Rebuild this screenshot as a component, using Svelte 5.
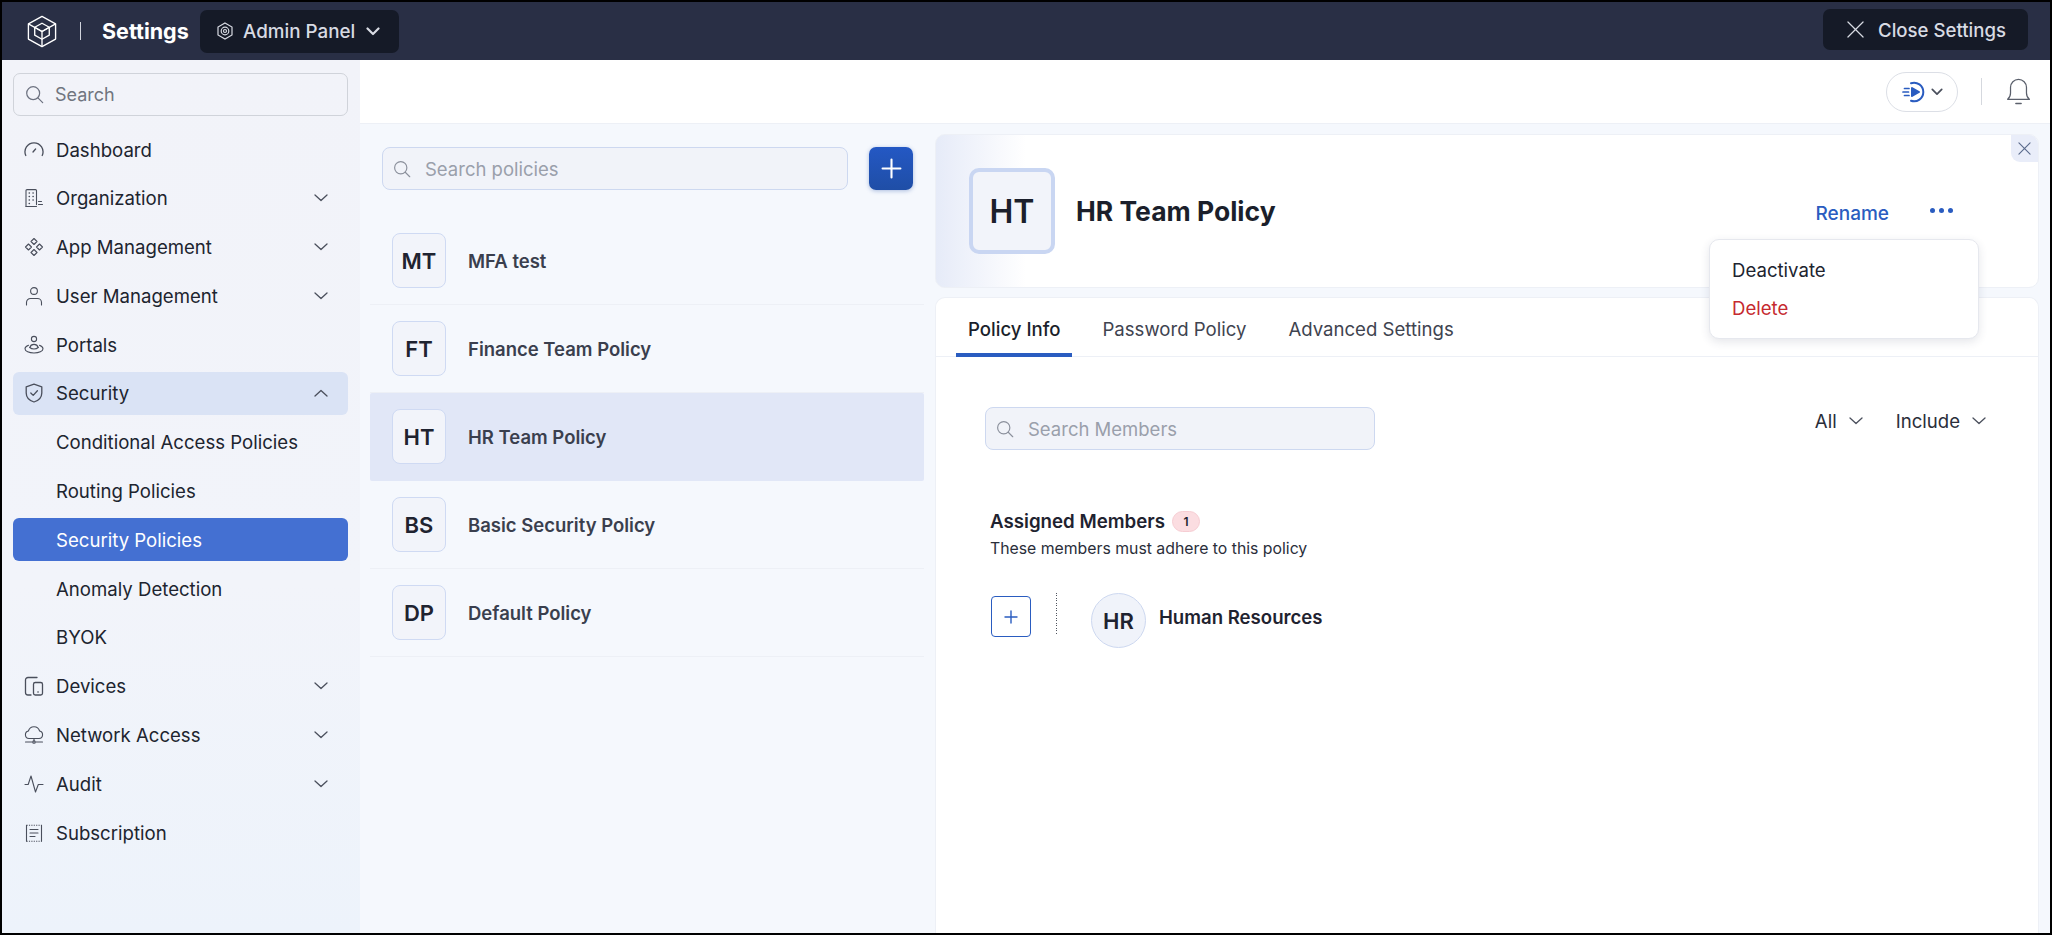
<script>
    const nav = [
        { label: "Dashboard", icon: "gauge" },
        { label: "Organization", icon: "building", arrow: "down" },
        { label: "App Management", icon: "apps", arrow: "down" },
        { label: "User Management", icon: "user", arrow: "down" },
        { label: "Portals", icon: "portal" },
        { label: "Security", icon: "shield", arrow: "up", open: true },
        { label: "Conditional Access Policies" },
        { label: "Routing Policies" },
        { label: "Security Policies", active: true },
        { label: "Anomaly Detection" },
        { label: "BYOK" },
        { label: "Devices", icon: "devices", arrow: "down" },
        { label: "Network Access", icon: "cloud", arrow: "down" },
        { label: "Audit", icon: "pulse", arrow: "down" },
        { label: "Subscription", icon: "receipt" }
    ]

    const policies = [
        { short: "MT", name: "MFA test" },
        { short: "FT", name: "Finance Team Policy" },
        { short: "HT", name: "HR Team Policy", selected: true },
        { short: "BS", name: "Basic Security Policy" },
        { short: "DP", name: "Default Policy" }
    ]

    const tabs = ["Policy Info", "Password Policy", "Advanced Settings"]
</script>

{#snippet searchIcon()}
    <svg class="search-icon" viewBox="0 0 20 20" fill="none" stroke="currentColor" stroke-width="1.3" stroke-linecap="round">
        <circle cx="8.6" cy="8.6" r="6.8" />
        <path d="M13.6 13.6 18.6 18.6" />
    </svg>
{/snippet}

{#snippet chevron(dir)}
    <svg class="chevron" viewBox="0 0 14 8" fill="none" stroke="currentColor" stroke-width="1.3" stroke-linecap="round" stroke-linejoin="round">
        {#if dir === "up"}
            <path d="M1 7 7 1.5 13 7" />
        {:else}
            <path d="M1 1 7 6.5 13 1" />
        {/if}
    </svg>
{/snippet}

{#snippet navIcon(name)}
    <svg class="nav-icon" viewBox="0 0 20 20" fill="none" stroke="currentColor" stroke-width="1.1" stroke-linecap="round" stroke-linejoin="round">
        {#if name === "gauge"}
            <path d="M1.800 15.500a9 9 0 1 1 16.400 0" stroke-width="1.300" /><path d="M9 12 11.600 9" stroke-width="1.300" />
        {:else if name === "building"}
            <path d="M2 18.500V2.600a1 1 0 0 1 1-1h8.500a1 1 0 0 1 1 1v14" /><path d="M2 18.500h10.500" /><path d="M14.500 13.500h3M14.500 16.500h4" />
            <path d="M5.200 5h.2M9 5h.2M5.200 8.500h.2M9 8.500h.2M5.200 12h.2M9 12h.2M5.200 15.500h.2" stroke-width="1.500" />
        {:else if name === "apps"}
            <path d="M10 1.500 13 4.500 10 7.500 7 4.500Z" /><path d="M10 12.500 13 15.500 10 18.500 7 15.500Z" /><path d="M4.500 7 7.500 10 4.500 13 1.500 10Z" /><path d="M15.500 7 18.500 10 15.500 13 12.500 10Z" />
        {:else if name === "user"}
            <circle cx="10" cy="5" r="3.400" /><path d="M2.500 19v-2.500a4 4 0 0 1 4-4h7a4 4 0 0 1 4 4V19" />
        {:else if name === "portal"}
            <circle cx="10" cy="4" r="2.600" /><path d="M5.800 12.500a4.400 4.400 0 0 1 8.400 0" /><path d="M4.500 10.200C2.600 11 1 12 1 13.700 1 16.200 5 18 10 18s9-1.800 9-4.300c0-1.700-1.600-2.700-3.500-3.500" /><path d="M5.800 12.500c1 1 2.500 1.500 4.200 1.500s3.200-.5 4.200-1.500" />
        {:else if name === "shield"}
            <path d="M10 1.200 17.800 3.800V10c0 4.500-3.400 7.600-7.800 9-4.400-1.400-7.800-4.500-7.800-9V3.800Z" stroke-width="1.300" /><path d="M6.800 10 9.200 12.400 13.400 7.800" stroke-width="1.300" />
        {:else if name === "devices"}
            <path d="M13 1.500H4a2.500 2.500 0 0 0-2.500 2.500v12.500A2.500 2.500 0 0 0 4 19h3" stroke-width="1.300" /><rect x="9.500" y="6.500" width="9" height="12.500" rx="1.800" stroke-width="1.300" /><path d="M14 16h.1" stroke-width="1.600" />
        {:else if name === "cloud"}
            <path d="M5 13.500a3.800 3.800 0 0 1-.6-7.500 5.800 5.800 0 0 1 11.200 0 3.800 3.800 0 0 1-.6 7.500Z" /><path d="M10 13.500v3.500M1.500 17h6.500M12 17h6.500" /><circle cx="10" cy="17" r="1.300" />
        {:else if name === "pulse"}
            <path d="M1 10.500h3.200L7 2l4.500 16 2.800-7.500H19" />
        {:else if name === "receipt"}
            <path d="M2.500 2.200v16M17.500 2.200v16" /><path d="M2.500 2.200h15M2.500 18.200h15" stroke-dasharray="1.200 1.200" stroke-linecap="butt" /><path d="M6 6.500h8M6 10h8M6 13.500h5" />
        {/if}
    </svg>
{/snippet}

<div class="frame">
    <header class="topbar">
        <svg class="logo" viewBox="0 0 32 34" fill="none" stroke="#fff" stroke-width="1.400" stroke-linejoin="round">
            <path d="M16 1.500 30 9.200V24.800L16 32.500 2 24.800V9.200Z" />
            <path d="M2 9.200 16 17 30 9.200M16 17V32.500" />
            <path d="M16 8.500 23.500 12.600V20.800L16 25 8.500 20.800V12.600Z" />
            <path d="M8.500 12.600 16 17 23.500 12.600" />
        </svg>
        <span class="top-sep"></span>
        <span class="top-title">Settings</span>
        <div class="panel-switch">
            <svg class="hex" viewBox="0 0 18 18" fill="none" stroke="#d8dbe3" stroke-width="1.200">
                <path d="M9 1 16 5V13L9 17 2 13V5Z" />
                <circle cx="9" cy="9" r="3.800" />
                <circle cx="9" cy="9" r="1.500" />
            </svg>
            <span>Admin Panel</span>
            <svg class="bold-chevron" viewBox="0 0 14 9" fill="none" stroke="currentColor" stroke-width="2.200" stroke-linecap="round" stroke-linejoin="round"><path d="M1.500 1.500 7 7 12.500 1.500" /></svg>
        </div>
        <div class="close-settings">
            <svg class="x-icon" viewBox="0 0 18 18" fill="none" stroke="currentColor" stroke-width="1.300" stroke-linecap="round"><path d="M1 1 17 17M17 1 1 17" /></svg>
            <span>Close Settings</span>
        </div>
    </header>

    <div class="body">
        <aside class="sidebar">
            <div class="side-search">
                {@render searchIcon()}
                <span>Search</span>
            </div>
            <nav>
                {#each nav as item}
                    <div class="nav-item" class:open={item.open} class:active={item.active}>
                        {#if item.icon}
                            <span class="icon-slot">{@render navIcon(item.icon)}</span>
                        {:else}
                            <span class="icon-slot"></span>
                        {/if}
                        <span class="nav-label">{item.label}</span>
                        {#if item.arrow}
                            {@render chevron(item.arrow)}
                        {/if}
                    </div>
                {/each}
            </nav>
        </aside>

        <main class="main">
            <div class="subbar">
                <div class="play-pill">
                    <svg class="play" viewBox="0 0 24 24" fill="none" stroke="#2a5cc0" stroke-width="2" stroke-linecap="round">
                        <path d="M9 3.200A9.300 9.300 0 1 1 9 20.800" />
                        <path d="M10 8 17 12 10 16Z" fill="#2a5cc0" stroke-linejoin="round" />
                        <path d="M2.500 8.500H7M1 12H6.500M2.500 15.500H7" stroke-width="1.700" />
                    </svg>
                    <svg class="bold-chevron small" viewBox="0 0 14 9" fill="none" stroke="currentColor" stroke-width="2" stroke-linecap="round" stroke-linejoin="round"><path d="M1.500 1.500 7 7 12.500 1.500" /></svg>
                </div>
                <span class="sub-sep"></span>
                <svg class="bell" viewBox="0 0 24 28" fill="none" stroke="#5b606c" stroke-width="1.200" stroke-linecap="round" stroke-linejoin="round">
                    <path d="M1.500 21.500c2-1.500 2.800-3.500 2.800-6V10a7.700 7.700 0 0 1 15.400 0v5.500c0 2.500.8 4.500 2.800 6Z" />
                    <path d="M9.500 25.500h5" stroke-width="1.500" />
                </svg>
            </div>

            <div class="content">
                <section class="list">
                    <div class="list-head">
                        <div class="search-box">
                            {@render searchIcon()}
                            <span>Search policies</span>
                        </div>
                        <div class="add-btn">
                            <svg viewBox="0 0 20 20" fill="none" stroke="#fff" stroke-width="2" stroke-linecap="round"><path d="M10 1.500V18.500M1.500 10H18.500" /></svg>
                        </div>
                    </div>
                    {#each policies as policy}
                        <div class="policy" class:selected={policy.selected}>
                            <div class="policy-avatar">{policy.short}</div>
                            <span class="policy-name">{policy.name}</span>
                        </div>
                    {/each}
                </section>

                <section class="detail">
                    <div class="detail-head">
                        <div class="big-avatar">HT</div>
                        <h1>HR Team Policy</h1>
                        <a class="rename" href="#rename">Rename</a>
                        <span class="dots"><i></i><i></i><i></i></span>
                        <div class="corner-close">
                            <svg viewBox="0 0 14 14" fill="none" stroke="#5a6a8c" stroke-width="1.200" stroke-linecap="round"><path d="M1 1 13 13M13 1 1 13" /></svg>
                        </div>
                        <div class="menu">
                            <div>Deactivate</div>
                            <div class="danger">Delete</div>
                        </div>
                    </div>

                    <div class="detail-card">
                        <div class="tabs">
                            {#each tabs as tab, i}
                                <div class="tab" class:current={i === 0}>{tab}</div>
                            {/each}
                        </div>
                        <div class="members">
                            <div class="members-tools">
                                <div class="search-box member-search">
                                    {@render searchIcon()}
                                    <span>Search Members</span>
                                </div>
                                <div class="filters">
                                    <span class="filter">All {@render chevron("down")}</span>
                                    <span class="filter">Include {@render chevron("down")}</span>
                                </div>
                            </div>
                            <div class="assigned-title">
                                <h2>Assigned Members</h2>
                                <span class="badge">1</span>
                            </div>
                            <p class="assigned-sub">These members must adhere to this policy</p>
                            <div class="member-row">
                                <div class="member-add">
                                    <svg viewBox="0 0 14 14" fill="none" stroke="#2a5cc0" stroke-width="1.400" stroke-linecap="round"><path d="M7 1V13M1 7H13" /></svg>
                                </div>
                                <span class="dotted"></span>
                                <div class="member-avatar">HR</div>
                                <span class="member-name">Human Resources</span>
                            </div>
                        </div>
                    </div>
                </section>
            </div>
        </main>
    </div>
</div>

<style>
    :global(body) {
        margin: 0;
        background: #000;
    }

    .frame {
        width: 2052px;
        height: 935px;
        box-sizing: border-box;
        padding: 2px 2px 2px 2px;
        display: flex;
        flex-direction: column;
        overflow: hidden;
        font-family: Inter, "Liberation Sans", sans-serif;
        color: #1f2330;
    }

    .topbar {
        height: 58px;
        flex: none;
        background: #292f45;
        display: flex;
        align-items: center;
        padding: 0 22px 0 24px;
        color: #fff;
    }

    .logo {
        width: 32px;
        height: 33px;
    }

    .top-sep {
        width: 1px;
        height: 18px;
        background: #d0d3dc;
        margin-left: 22px;
    }

    .top-title {
        font-size: 21.5px;
        font-weight: 700;
        margin-left: 21px;
        width: 98px;
    }

    .panel-switch {
        width: 199px;
        height: 43px;
        box-sizing: border-box;
        background: #151a27;
        border-radius: 7px;
        display: flex;
        align-items: center;
        padding-left: 16px;
        font-size: 18.8px;
        font-weight: 500;
        color: #d8dbe3;
    }

    .hex {
        width: 18px;
        height: 18px;
        margin-right: 9px;
    }

    .bold-chevron {
        width: 14px;
        height: 9px;
        margin-left: 11px;
    }

    .close-settings {
        margin-left: auto;
        width: 205px;
        height: 41px;
        box-sizing: border-box;
        margin-top: -3px;
        background: #151a27;
        border-radius: 7px;
        display: flex;
        align-items: center;
        padding-left: 24px;
        font-size: 18.6px;
        font-weight: 500;
        color: #d8dbe3;
    }

    .x-icon {
        width: 17px;
        height: 17px;
        margin-right: 14px;
    }

    .body {
        flex: 1;
        display: flex;
        min-height: 0;
    }

    .sidebar {
        width: 358px;
        flex: none;
        box-sizing: border-box;
        padding: 13px 12px 0 11px;
        background: linear-gradient(180deg, #f2f3f9 0%, #f2f4fa 60%, #edf3fb 100%);
    }

    .side-search {
        height: 43px;
        box-sizing: border-box;
        border: 1px solid #d0d3da;
        border-radius: 7px;
        display: flex;
        align-items: center;
        padding-left: 11px;
        font-size: 18px;
        color: #70757f;
        margin-bottom: 12px;
    }

    .search-icon {
        width: 19px;
        height: 19px;
        flex: none;
        margin-right: 11px;
        color: #6d7280;
    }

    nav {
        display: flex;
        flex-direction: column;
        gap: 5.8px;
    }

    .nav-item {
        height: 43px;
        display: flex;
        align-items: center;
        border-radius: 6px;
        font-size: 18.6px;
        padding-left: 11px;
        padding-right: 20px;
        color: #20242f;
    }

    .nav-item.open {
        background: #dae3f5;
    }

    .nav-item.active {
        background: #4470d2;
        color: #fff;
    }

    .icon-slot {
        width: 20px;
        height: 20px;
        margin-right: 12px;
        flex: none;
    }

    .nav-icon {
        width: 20px;
        height: 20px;
        display: block;
        color: #4a4f5c;
    }

    .nav-label {
        flex: 1;
    }

    .chevron {
        width: 14px;
        height: 8px;
        color: #4a4f5c;
        flex: none;
    }

    .main {
        flex: 1;
        display: flex;
        flex-direction: column;
        min-width: 0;
    }

    .subbar {
        height: 64px;
        flex: none;
        background: #fff;
        border-bottom: 1px solid #edf0f6;
        box-sizing: border-box;
        display: flex;
        align-items: center;
        justify-content: flex-end;
        padding-right: 19px;
    }

    .play-pill {
        width: 72px;
        height: 40px;
        box-sizing: border-box;
        border: 1px solid #dcdfe6;
        border-radius: 20px;
        display: flex;
        align-items: center;
        justify-content: center;
        gap: 5px;
        color: #4a4f5c;
    }

    .play {
        width: 24px;
        height: 24px;
    }

    .bold-chevron.small {
        width: 12px;
        height: 8px;
        margin-left: 0;
    }

    .sub-sep {
        width: 1px;
        height: 27px;
        background: #d5d8de;
        margin: 0 24px 0 23px;
    }

    .bell {
        width: 25px;
        height: 29px;
    }

    .content {
        flex: 1;
        display: flex;
        background: #f5f8fd;
        min-height: 0;
    }

    .list {
        width: 575px;
        flex: none;
        box-sizing: border-box;
        padding: 23px 11px 0 10px;
    }

    .list-head {
        display: flex;
        align-items: center;
        padding: 0 11px 0 12px;
        margin-bottom: 27px;
    }

    .search-box {
        flex: 1;
        height: 43px;
        box-sizing: border-box;
        background: #f1f3f9;
        border: 1px solid #cdd8f0;
        border-radius: 8px;
        display: flex;
        align-items: center;
        padding-left: 10px;
        font-size: 18.5px;
        color: #9a9fab;
    }

    .search-box .search-icon {
        color: #8b909c;
        margin-right: 14px;
        width: 18px;
        height: 18px;
    }

    .add-btn {
        width: 44px;
        height: 43px;
        margin-left: 21px;
        border-radius: 7px;
        background: linear-gradient(180deg, #2458c4 0%, #1f4ea6 100%);
        box-shadow: 0 1px 4px rgba(31, 78, 166, 0.35);
        display: flex;
        align-items: center;
        justify-content: center;
    }

    .add-btn svg {
        width: 21px;
        height: 21px;
    }

    .policy {
        height: 88px;
        box-sizing: border-box;
        display: flex;
        align-items: center;
        padding-left: 22px;
        border-bottom: 1px solid #edf0f6;
    }

    .policy.selected {
        background: #e1e7f7;
        border-bottom-color: transparent;
        border-radius: 2px;
    }

    .policy-avatar {
        width: 54px;
        height: 55px;
        box-sizing: border-box;
        background: #f2f4fa;
        border: 1.500px solid #cfdaf3;
        border-radius: 8px;
        display: flex;
        align-items: center;
        justify-content: center;
        font-size: 22px;
        font-weight: 600;
        color: #1f2330;
        margin-right: 22px;
    }

    .policy-name {
        font-size: 18.5px;
        font-weight: 600;
        color: #3a3f4e;
    }

    .detail {
        flex: 1;
        min-width: 0;
        display: flex;
        flex-direction: column;
        padding: 10px 11px 0 0;
        gap: 9px;
    }

    .detail-head {
        position: relative;
        height: 154px;
        flex: none;
        box-sizing: border-box;
        background: linear-gradient(90deg, #e6ebf8 0, #fff 90px);
        border: 1px solid #edf0f6;
        border-radius: 10px;
        display: flex;
        align-items: center;
        padding-left: 33px;
    }

    .big-avatar {
        width: 86px;
        height: 86px;
        box-sizing: border-box;
        background: #f2f4fa;
        border: 4px solid #c9d6f2;
        border-radius: 10px;
        display: flex;
        align-items: center;
        justify-content: center;
        font-size: 32px;
        font-weight: 600;
        color: #1b1f2b;
    }

    h1 {
        margin: 0 0 0 21px;
        font-size: 26.5px;
        font-weight: 700;
        color: #1b1f2b;
    }

    .rename {
        margin-left: auto;
        margin-top: 4px;
        font-size: 19px;
        font-weight: 500;
        color: #2a5cc0;
        text-decoration: none;
    }

    .dots {
        display: flex;
        gap: 4px;
        margin: 0 85px 2px 41px;
    }

    .dots i {
        width: 5px;
        height: 5px;
        border-radius: 50%;
        background: #2a5cc0;
    }

    .corner-close {
        position: absolute;
        top: 0;
        right: 0;
        width: 27px;
        height: 27px;
        background: #e9edf9;
        border-radius: 0 9px 0 9px;
        display: flex;
        align-items: center;
        justify-content: center;
    }

    .corner-close svg {
        width: 13px;
        height: 13px;
    }

    .menu {
        position: absolute;
        top: 104px;
        right: 59px;
        width: 270px;
        height: 100px;
        box-sizing: border-box;
        background: #fff;
        border: 1px solid #e6e8ee;
        border-radius: 10px;
        box-shadow: 0 3px 10px rgba(40, 50, 80, 0.12);
        padding: 11px 22px;
        font-size: 18.6px;
        color: #20242f;
        z-index: 2;
    }

    .menu div {
        height: 38px;
        line-height: 38px;
    }

    .menu .danger {
        color: #c62a2f;
    }

    .detail-card {
        flex: 1;
        background: #fff;
        border: 1px solid #edf0f6;
        border-bottom: none;
        border-radius: 10px 10px 0 0;
    }

    .tabs {
        height: 59px;
        box-sizing: border-box;
        border-bottom: 1px solid #edf0f6;
        display: flex;
        padding-left: 20px;
    }

    .tab {
        padding: 2px 12px 0;
        margin-right: 18px;
        height: 59px;
        box-sizing: border-box;
        line-height: 58px;
        font-size: 18.6px;
        color: #3f4450;
    }

    .tab.current {
        color: #1b1f2b;
        font-weight: 500;
        border-bottom: 4px solid #2a5cc0;
    }

    .members {
        padding: 50px 52px 0 49px;
    }

    .members-tools {
        display: flex;
        align-items: flex-start;
        justify-content: space-between;
    }

    .member-search {
        flex: none;
        width: 390px;
    }

    .filters {
        display: flex;
        gap: 33px;
        margin-top: 3px;
    }

    .filter {
        display: flex;
        align-items: center;
        gap: 12px;
        font-size: 18.6px;
        color: #2a2e3a;
    }

    .assigned-title {
        display: flex;
        align-items: center;
        margin: 60px 0 0 5px;
    }

    h2 {
        margin: 0;
        font-size: 18.7px;
        font-weight: 600;
        color: #1f2330;
    }

    .badge {
        margin-left: 7px;
        width: 28px;
        height: 21px;
        background: #fbdde1;
        border: 1px solid #f6cdd3;
        box-sizing: border-box;
        border-radius: 11px;
        display: flex;
        align-items: center;
        justify-content: center;
        font-size: 12px;
        font-weight: 600;
    }

    .assigned-sub {
        margin: 6px 0 0 5px;
        font-size: 15.8px;
        color: #2a2e3a;
    }

    .member-row {
        display: flex;
        align-items: flex-start;
        margin: 35px 0 0 6px;
    }

    .member-add {
        width: 40px;
        height: 41px;
        box-sizing: border-box;
        border: 1.500px solid #2a5cc0;
        border-radius: 4px;
        display: flex;
        align-items: center;
        justify-content: center;
        margin-top: 3px;
    }

    .member-add svg {
        width: 14px;
        height: 14px;
    }

    .dotted {
        width: 1px;
        height: 41px;
        background: repeating-linear-gradient(180deg, #50555f 0 1px, transparent 1px 2.500px);
        margin: 0 34px 0 25px;
    }

    .member-avatar {
        width: 55px;
        height: 55px;
        box-sizing: border-box;
        background: #f0f3fa;
        border: 1.500px solid #cdd8f0;
        border-radius: 50%;
        display: flex;
        align-items: center;
        justify-content: center;
        font-size: 22px;
        font-weight: 600;
        color: #1f2330;
    }

    .member-name {
        margin: 13px 0 0 13px;
        font-size: 18.6px;
        font-weight: 600;
        color: #1f2330;
    }
</style>
